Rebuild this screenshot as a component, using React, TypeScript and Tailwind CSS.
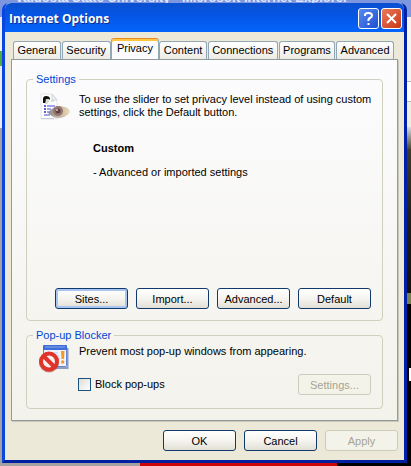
import clsx from "clsx";

const tabs = ["General", "Security", "Privacy", "Content", "Connections", "Programs", "Advanced"];

interface XpButtonProps {
  label: string;
  focused?: boolean;
  disabled?: boolean;
}

function XpButton({ label, focused, disabled }: XpButtonProps) {
  return (
    <button
      type="button"
      disabled={disabled}
      className={clsx(
        "h-[21px] w-[73px] shrink-0 rounded-[3px] border text-center leading-[18px]",
        disabled
          ? "border-[#cdcbbb] bg-[#f4f3e9] text-[#a5a394]"
          : "border-[#12396b] bg-linear-to-b from-white via-[#f5f4ef] to-[#e2dfd5]",
        focused && "shadow-[inset_0_0_0_2px_#a9c6f2]"
      )}
    >
      {label}
    </button>
  );
}

function PrivacyIcon() {
  return (
    <svg width="32" height="28" viewBox="0 0 32 28" className="shrink-0">
      <defs>
        <linearGradient id="eye" x1="0" y1="0" x2="1" y2="0">
          <stop offset="0" stopColor="#8d8a88" />
          <stop offset="0.5" stopColor="#c4b0a2" />
          <stop offset="1" stopColor="#ecdfb8" />
        </linearGradient>
      </defs>
      <path d="M2 1H13L18 7V26H2Z" fill="#fff" stroke="#e3e6ec" />
      <path d="M2 25.500H15" stroke="#c9ccd6" />
      <path d="M13 1V7H18Z" fill="#f1f4f8" stroke="#cdd3da" />
      <path d="M4 10V6Q4 3 7 3Q11 3 11 6Q11 7 9 7L7 10Z" fill="#111" />
      <path d="M7 6h3v3l-2 2H6z" fill="#d5dccb" />
      <path d="M12 8h3" stroke="#a8d6a4" />
      <path d="M5 13h2M5 16h2M5 19h2" stroke="#2d2fc0" strokeWidth="1.5" />
      <path d="M8 13h8M8 16h4M8 19h4M5 22h6" stroke="#7f86e6" strokeWidth="1.5" />
      <path d="M12 23Q22 29 31 19L27 20Q20 25 12 21Z" fill="#c4beb6" />
      <path d="M9 20Q14 13 21 13Q30 14 31 18Q29 24 20 24Q13 24 9 20Z" fill="url(#eye)" />
      <circle cx="19" cy="18" r="5" fill="#94766f" />
      <circle cx="19" cy="18" r="2.5" fill="#5e4042" />
      <circle cx="18" cy="17" r="1" fill="#d9c6c8" />
    </svg>
  );
}

function PopupIcon() {
  return (
    <svg width="32" height="28" viewBox="0 0 32 28" className="shrink-0">
      <path d="M6 23H28.500V3" fill="none" stroke="#8c9cbf" strokeWidth="2" />
      <rect x="4.5" y="0.5" width="23" height="21" rx="1" fill="#eef3ff" stroke="#6486cf" />
      <path d="M4 1Q4 0 5 0H27Q28 0 28 1V5H4Z" fill="#3f6ed8" />
      <path d="M6 2h20" stroke="#86a7ee" />
      <path d="M12 8h7M16 11h4M18 14h3" stroke="#b9c6e0" />
      <path d="M22 6h3.500l-.5 8h-2.500z" fill="#f79a1c" />
      <circle cx="23.700" cy="17" r="1.700" fill="#f79a1c" />
      <circle cx="10" cy="17.500" r="8" fill="none" stroke="#9b2a22" strokeWidth="4" opacity="0.5" />
      <circle cx="10" cy="16.500" r="8" fill="#fbeeec" stroke="#df3429" strokeWidth="4" />
      <path d="M4.500 11L15.500 22" stroke="#df3429" strokeWidth="4" />
    </svg>
  );
}

function Desktop() {
  return (
    <div aria-hidden="true" className="absolute inset-0 flex flex-col overflow-hidden bg-[#a5a1a2]">
      <div className="relative h-[17px] shrink-0 bg-[#7c96df]">
        <p className="absolute -top-[11px] left-[15px] whitespace-nowrap text-[13px] leading-[18px] font-bold text-[#dfe8ff]">
          Valdosta State University - Microsoft Internet Explorer
        </p>
      </div>
      <div className="flex grow">
        <div className="flex w-[3px] flex-col">
          <div className="h-[34px] bg-[#eef0f8]" />
          <div className="h-[15px] bg-[#4eae3c]" />
          <div className="h-[62px] bg-[#e9ecf2]" />
          <div className="grow bg-[#a5a1a2]" />
        </div>
        <div className="grow" />
        <div className="flex w-[6px] flex-col items-end bg-black">
          <div className="h-[64px] w-full bg-[#f5f5f2]" />
          <div className="h-[20px] w-full border-t border-[#b8b8b0] bg-white" />
          <div className="h-[26px] w-full border-t border-[#b8b8b0] bg-[#efede2]" />
          <div className="h-[22px] w-full bg-linear-to-b from-[#d9dde4] to-[#4c4a35]" />
          <div className="h-[144px] w-full bg-linear-to-b from-[#40392c] via-[#201d1b] to-[#15100d]" />
          <div className="h-[11px] w-full bg-[#78814d]" />
          <div className="mt-[64px] h-[13px] w-[2px] bg-white" />
        </div>
      </div>
      <div className="flex h-[4px] shrink-0">
        <div className="w-[34%]" />
        <div className="grow bg-[#cb0505]" />
        <div className="w-[18%] bg-black" />
      </div>
    </div>
  );
}

function TitleBar() {
  return (
    <header className="flex h-[29px] items-center gap-[2px] rounded-t-[6px] bg-linear-to-b from-[#0a50cf] via-[#0457e8] to-[#0364fb] pt-[2px] pr-[2px] pl-[4px]">
      <h1 className="grow font-['Open_Sans','Noto_Sans',sans-serif] text-[12px] font-bold text-white [text-shadow:1px_1px_#0a2f91]">
        Internet Options
      </h1>
      <button
        type="button"
        aria-label="Help"
        className="flex size-[21px] items-center justify-center rounded-[3px] border border-white bg-linear-to-br from-[#5a89ee] to-[#1f4fd0]"
      >
        <svg width="13" height="15" viewBox="0 0 13 15" fill="none" stroke="#fff" strokeWidth="2">
          <path d="M3 5V4Q3 2 6.500 2T10 4.500Q10 6 8 7T6.500 10" />
          <path d="M6.500 12v2" />
        </svg>
      </button>
      <button
        type="button"
        aria-label="Close"
        className="flex size-[21px] items-center justify-center rounded-[3px] border border-white bg-linear-to-br from-[#e9795a] to-[#c8350d]"
      >
        <svg width="13" height="13" viewBox="0 0 13 13" stroke="#fff" strokeWidth="2">
          <path d="M2 2L11 11M11 2L2 11" />
        </svg>
      </button>
    </header>
  );
}

export default function App() {
  return (
    <div className="relative min-h-screen pt-[3px] pr-[4px] pb-[3px] pl-[2px] font-['Liberation_Sans',Arial,sans-serif] text-[11px] leading-[13px] text-black">
      <Desktop />

      <main className="relative rounded-t-[7px] border-x-[3px] border-b-[3px] border-[#0831d9] border-r-[#0020a8] border-b-[#001ea0] border-l-[#0a45e0] bg-[#ece9d8]">
        <TitleBar />

        <div className="px-[6px] pt-[7px] pb-[9px]">
          <div role="tablist" className="flex h-[20px] items-end gap-[1px] pr-[4px] pl-[2px]">
            {tabs.map((tab) => {
              const active = tab === "Privacy";
              return (
                <button
                  key={tab}
                  type="button"
                  role="tab"
                  aria-selected={active}
                  className={clsx(
                    "flex-auto rounded-t-[3px] border border-b-0 text-center",
                    active
                      ? "relative -mx-px h-[21px] border-[#91a7b4] border-t-[#e68b2c] bg-[#fcfcfe] px-[2px] pb-[2px] shadow-[inset_0_2px_#ffc73c]"
                      : "h-[18px] border-[#91a7b4] bg-linear-to-b from-white to-[#ecebe5]"
                  )}
                >
                  {tab}
                </button>
              );
            })}
          </div>

          <section
            role="tabpanel"
            aria-label="Privacy"
            className="border border-[#919b9c] bg-linear-to-b from-[#fcfcfe] to-[#f3f2eb] px-[14px] pt-[12px] pb-[11px] shadow-[1px_1px_#c9c7ba]"
          >
            <fieldset className="rounded-[4px] border border-[#d0d0bf] pb-[11px]">
              <legend className="ml-[6px] px-[3px] leading-[14px] text-[#0046d5]">Settings</legend>
              <div className="flex gap-[8px] pt-[7px] pl-[12px]">
                <PrivacyIcon />
                <p>
                  To use the slider to set privacy level instead of using custom
                  <br />
                  settings, click the Default button.
                </p>
              </div>
              <div className="mt-[21px] ml-[66px]">
                <h2 className="font-bold">Custom</h2>
                <p className="mt-[11px]">- Advanced or imported settings</p>
              </div>
              <div className="mt-[109px] flex justify-end gap-[8px] pr-[11px]">
                <XpButton label="Sites..." focused />
                <XpButton label="Import..." />
                <XpButton label="Advanced..." />
                <XpButton label="Default" />
              </div>
            </fieldset>

            <fieldset className="mt-[7px] rounded-[4px] border border-[#d0d0bf] pb-[13px]">
              <legend className="ml-[6px] px-[3px] leading-[14px] text-[#0046d5]">Pop-up Blocker</legend>
              <div className="flex gap-[8px] pt-[3px] pl-[12px]">
                <PopupIcon />
                <p>Prevent most pop-up windows from appearing.</p>
              </div>
              <div className="mt-[1px] flex items-center justify-between pr-[11px] pl-[51px]">
                <label className="flex items-center gap-[4px]">
                  <input
                    type="checkbox"
                    className="size-[13px] appearance-none border border-[#1c5180] bg-linear-to-br from-[#dcdcd7] to-white checked:bg-[#21a121]"
                  />
                  Block pop-ups
                </label>
                <XpButton label="Settings..." disabled />
              </div>
            </fieldset>
          </section>

          <footer className="mt-[9px] flex justify-end gap-[8px]">
            <XpButton label="OK" />
            <XpButton label="Cancel" />
            <XpButton label="Apply" disabled />
          </footer>
        </div>
      </main>
    </div>
  );
}
